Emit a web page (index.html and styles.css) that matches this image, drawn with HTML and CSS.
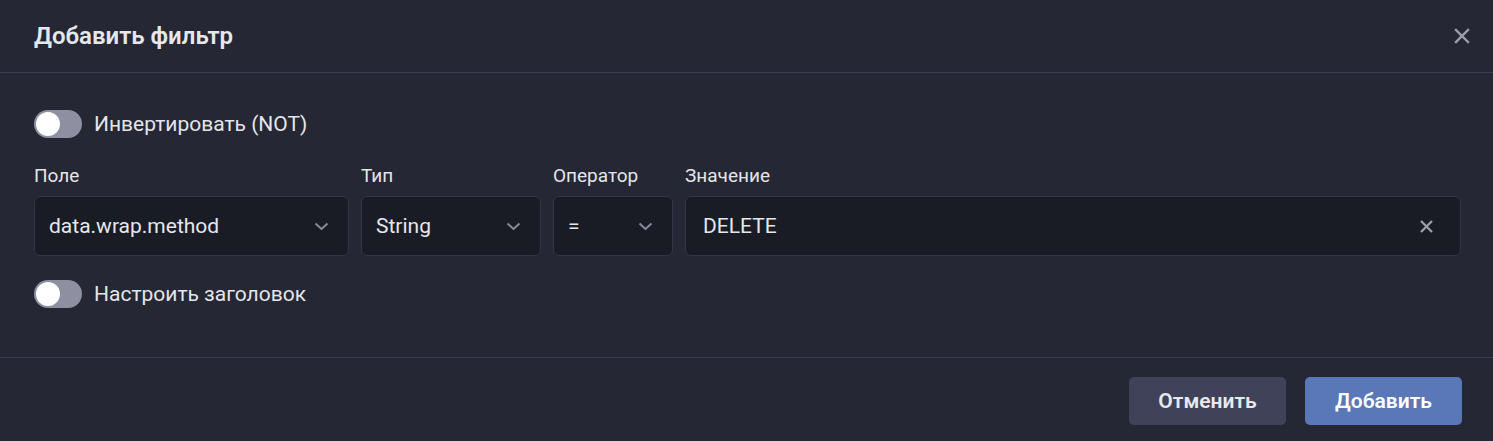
FILE: index.html
```html
<!DOCTYPE html>
<html lang="ru">
<head>
<meta charset="utf-8">
<title>Добавить фильтр</title>
<link rel="stylesheet" href="styles.css">
</head>
<body>
<div class="modal">
  <div class="header">
    <h2 class="title">Добавить фильтр</h2>
    <button class="close" aria-label="Закрыть">
      <svg width="16" height="16" viewBox="0 0 16 16"><path d="M2 2L14 14M14 2L2 14" stroke="#9c9eb0" stroke-width="2.4" stroke-linecap="square"/></svg>
    </button>
  </div>
  <div class="body">
    <label class="toggle-row">
      <span class="switch"><span class="knob"></span></span>
      <span class="toggle-label">Инвертировать (NOT)</span>
    </label>
    <div class="fields">
      <div class="field f-field">
        <div class="label">Поле</div>
        <div class="input select"><span>data.wrap.method</span>
          <svg class="chev" width="15" height="9" viewBox="0 0 15 9"><path d="M1.5 1.5L7.5 7L13.5 1.5" fill="none" stroke="#8a8c9e" stroke-width="1.9"/></svg>
        </div>
      </div>
      <div class="field f-type">
        <div class="label">Тип</div>
        <div class="input select"><span>String</span>
          <svg class="chev" width="15" height="9" viewBox="0 0 15 9"><path d="M1.5 1.5L7.5 7L13.5 1.5" fill="none" stroke="#8a8c9e" stroke-width="1.9"/></svg>
        </div>
      </div>
      <div class="field f-op">
        <div class="label">Оператор</div>
        <div class="input select"><span>=</span>
          <svg class="chev" width="15" height="9" viewBox="0 0 15 9"><path d="M1.5 1.5L7.5 7L13.5 1.5" fill="none" stroke="#8a8c9e" stroke-width="1.9"/></svg>
        </div>
      </div>
      <div class="field f-value">
        <div class="label">Значение</div>
        <div class="input value"><span>DELETE</span>
          <svg class="clear" width="15" height="15" viewBox="0 0 15 15"><path d="M2 2L13 13M13 2L2 13" stroke="#9c9eb0" stroke-width="2.3"/></svg>
        </div>
      </div>
    </div>
    <label class="toggle-row">
      <span class="switch"><span class="knob"></span></span>
      <span class="toggle-label">Настроить заголовок</span>
    </label>
  </div>
  <div class="footer">
    <button class="btn btn-cancel">Отменить</button>
    <button class="btn btn-primary">Добавить</button>
  </div>
</div>
</body>
</html>
```
FILE: styles.css
```css
* { box-sizing: border-box; }
html, body {
  margin: 0;
  padding: 0;
  background: #252734;
  font-family: Roboto, "Noto Sans", "Liberation Sans", sans-serif;
  color: #e4e5ea;
}
.modal {
  width: 1493px;
  height: 441px;
  background: #252734;
}
.header {
  height: 73px;
  display: flex;
  align-items: center;
  justify-content: space-between;
  padding: 0 23px 0 34px;
  border-bottom: 1px solid #3a3c52;
}
.title {
  margin: 0;
  font-size: 24px;
  font-weight: 600;
  color: #e6e7ec;
  letter-spacing: 0;
}
.close {
  background: none;
  border: none;
  padding: 0;
  width: 16px;
  height: 16px;
  display: flex;
}
.body {
  padding: 37px 32px 49px 34px;
  display: flex;
  flex-direction: column;
}
.toggle-row {
  display: flex;
  align-items: center;
  gap: 12px;
  height: 28px;
}
.switch {
  width: 48px;
  height: 28px;
  border-radius: 14px;
  background: #8e90a2;
  position: relative;
  display: block;
}
.knob {
  position: absolute;
  left: 2px;
  top: 2px;
  width: 24px;
  height: 24px;
  border-radius: 50%;
  background: #ffffff;
}
.toggle-label {
  font-size: 21px;
  color: #e4e5ea;
}
.fields {
  display: flex;
  gap: 12px;
  margin: 27px 0 24px;
}
.field {
  display: flex;
  flex-direction: column;
  gap: 9px;
}
.label {
  font-size: 19px;
  line-height: 22px;
  color: #e4e5ea;
}
.f-field { width: 315px; }
.f-type { width: 180px; }
.f-op { width: 120px; }
.f-value { flex: 1; }
.input {
  height: 60px;
  background: #1a1c25;
  border: 1px solid #33354a;
  border-radius: 6px;
  display: flex;
  align-items: center;
  justify-content: space-between;
  font-size: 21px;
  color: #e6e7ec;
}
.select { padding: 0 19px 0 14px; }
.value { padding: 0 26px 0 17px; }
.chev { display: block; }
.clear { display: block; }
.footer {
  border-top: 1px solid #3a3c52;
  display: flex;
  justify-content: flex-end;
  gap: 19px;
  padding: 19px 31px 16px;
}
.btn {
  height: 48px;
  width: 157px;
  border: none;
  border-radius: 5px;
  font-family: Roboto, "Noto Sans", "Liberation Sans", sans-serif;
  font-size: 21px;
  font-weight: 600;
  color: #e8e9ee;
}
.btn-cancel { background: #3f4259; }
.btn-primary { background: #5a77b8; color: #ffffff; }
```
